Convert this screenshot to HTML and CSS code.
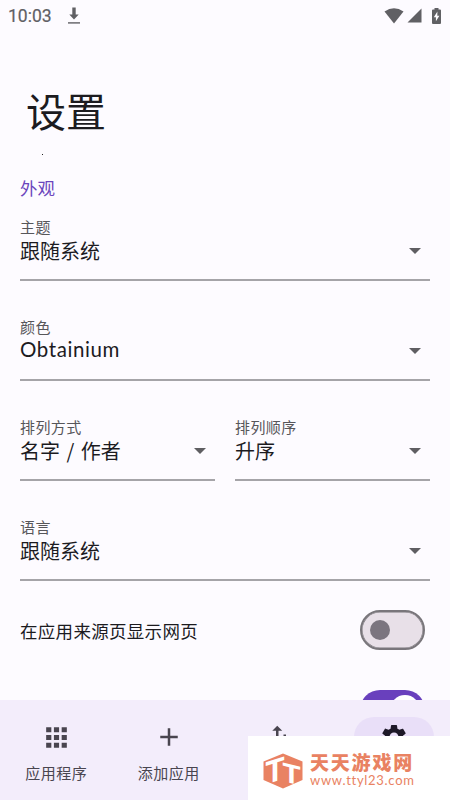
FILE: index.html
```
<!DOCTYPE html>
<html lang="zh-CN">
<head>
  <meta charset="UTF-8">
  <title>设置</title>
  <link rel="stylesheet" href="styles.css">
</head>
<body>
  <div class="screen">
    <header class="status-bar">
      <span class="clock">10:03</span>
      <svg class="download" width="14" height="18" viewBox="0 0 14 18">
        <path d="M5.3.5h3.400v7h3L7 12.500 2.300 7.500h3z"/>
        <path d="M1 15.200h12v1.400H1z"/>
      </svg>
      <div class="status-icons">
        <svg width="20" height="16" viewBox="0 0 20 16"><path d="M.5 3.600Q10-3 19.500 3.600L10 15.500z"/></svg>
        <svg width="15" height="15" viewBox="0 0 15 15"><path d="M14.500.5v14H.5z"/></svg>
        <svg class="battery" width="9" height="16" viewBox="0 0 9 16">
          <path d="M2.500 0h4v1.500H8q1 0 1 1V15q0 1-1 1H1q-1 0-1-1V2.500q0-1 1-1h1.500z"/>
          <path class="bolt" d="M5.400 3.500L1.800 9.300h2.100v4l3.500-5.600H5.300z"/>
        </svg>
      </div>
    </header>

    <main class="settings">
      <h1>设置</h1>
      <span class="dot"></span>
      <h2>外观</h2>

      <div class="field">
        <label>主题</label>
        <div class="value">跟随系统</div>
      </div>
      <div class="field">
        <label>颜色</label>
        <div class="value"><span class="latin">Obtainium</span></div>
      </div>
      <div class="field-row">
        <div class="field">
          <label>排列方式</label>
          <div class="value">名字 / 作者</div>
        </div>
        <div class="field">
          <label>排列顺序</label>
          <div class="value">升序</div>
        </div>
      </div>
      <div class="field">
        <label>语言</label>
        <div class="value">跟随系统</div>
      </div>

      <div class="switch-row">
        <span>在应用来源页显示网页</span>
        <div class="switch"></div>
      </div>
      <div class="switch-row">
        <span></span>
        <div class="switch on"></div>
      </div>
    </main>

    <nav class="bottom-nav">
      <div class="nav-item">
        <div class="nav-icon">
          <svg width="31" height="31" viewBox="0 0 24 24"><path d="M4 8h4V4H4zm6 12h4v-4h-4zm-6 0h4v-4H4zm0-6h4v-4H4zm6 0h4v-4h-4zm6-10v4h4V4zm-6 4h4V4h-4zm6 6h4v-4h-4zm0 6h4v-4h-4z"/></svg>
        </div>
        <span>应用程序</span>
      </div>
      <div class="nav-item">
        <div class="nav-icon">
          <svg width="30" height="30" viewBox="0 0 24 24"><path d="M19 13h-6v6h-2v-6H5v-2h6V5h2v6h6z"/></svg>
        </div>
        <span>添加应用</span>
      </div>
      <div class="nav-item">
        <div class="nav-icon">
          <svg width="30" height="30" viewBox="0 0 24 24"><path d="M9 3L5 6.990h3V14h2V6.990h3zm7 14.010V10h-2v7.010h-3L15 21l4-3.990z"/></svg>
        </div>
      </div>
      <div class="nav-item active">
        <div class="nav-icon">
          <svg width="30" height="30" viewBox="0 0 24 24"><path d="M19.140 12.940c.04-.3.06-.61.06-.94 0-.32-.02-.64-.07-.94l2.030-1.580c.18-.14.23-.41.12-.61l-1.920-3.320c-.12-.22-.37-.29-.59-.22l-2.390.96c-.5-.38-1.030-.7-1.620-.94l-.36-2.540c-.04-.24-.24-.41-.48-.41h-3.840c-.24 0-.43.17-.47.41l-.36 2.540c-.59.24-1.130.57-1.620.94l-2.390-.96c-.22-.08-.47 0-.59.22L2.740 8.870c-.12.21-.08.47.12.61l2.030 1.580c-.05.3-.09.63-.09.94s.02.64.07.94l-2.030 1.580c-.18.14-.23.41-.12.61l1.920 3.320c.12.22.37.29.59.22l2.390-.96c.5.38 1.030.7 1.620.94l.36 2.540c.05.24.24.41.48.41h3.840c.24 0 .44-.17.47-.41l.36-2.540c.59-.24 1.130-.56 1.620-.94l2.390.96c.22.08.47 0 .59-.22l1.920-3.320c.12-.22.07-.47-.12-.61zM12 15.600c-1.980 0-3.600-1.620-3.600-3.600s1.620-3.600 3.600-3.600 3.600 1.620 3.600 3.600-1.620 3.600-3.600 3.600z"/></svg>
        </div>
      </div>
    </nav>

    <div class="site-badge">
      <svg width="40" height="36" viewBox="0 0 40 36">
        <path d="M20 .5L39.500 8.500v18.500L20 35.500.5 27V8.500z"/>
        <text transform="translate(2.500 31.500) skewY(-18)" textLength="19" lengthAdjust="spacingAndGlyphs">T</text>
        <text class="small" transform="translate(19.500 28) skewY(14)" textLength="18" lengthAdjust="spacingAndGlyphs">T</text>
      </svg>
      <div class="site-text">
        <div class="site-name">天天游戏网</div>
        <div class="site-url">www.ttyl23.com</div>
      </div>
    </div>
  </div>
</body>
</html>
```
FILE: styles.css
```
body {
  margin: 0;
  font-family: "Noto Sans CJK SC", sans-serif;
  background-color: #fdfbff;
  color: #1c1b1f;
}

.screen {
  position: relative;
  display: flex;
  flex-direction: column;
  width: 450px;
  height: 800px;
  overflow: hidden;
}

.status-bar {
  display: flex;
  align-items: center;
  flex: none;
  height: 31px;
  padding: 0 9px 0 8px;
  box-sizing: border-box;
  color: #606064;
}

.status-bar svg {
  fill: #606064;
}

.clock {
  font-family: Roboto, sans-serif;
  font-size: 17.5px;
  line-height: 31px;
  padding-top: 1px;
  -webkit-text-stroke: 0.2px #606064;
}

.download {
  margin-left: 15px;
}

.status-icons {
  display: flex;
  align-items: center;
  gap: 3px;
  margin-left: auto;
}

.status-icons .battery {
  margin-left: 7px;
}

.status-icons .bolt {
  fill: #fdfbff;
}

.settings {
  flex: 1;
  min-height: 0;
  overflow: hidden;
  padding: 0 20px;
}

h1 {
  margin: 49px 0 0 6px;
  font-size: 40px;
  line-height: 60px;
  font-weight: 400;
}

.dot {
  position: absolute;
  left: 42px;
  top: 154px;
  width: 1px;
  height: 1px;
  background-color: #222;
}

h2 {
  margin: 35px 0 15px;
  font-size: 17.5px;
  line-height: 26px;
  font-weight: 400;
  color: #6b45bd;
}

.field {
  position: relative;
  flex: 1;
  height: 65px;
  margin-bottom: 35px;
  box-sizing: border-box;
  border-bottom: 2px solid #a5a4a8;
}

.field label {
  display: block;
  font-size: 15px;
  line-height: 22px;
  letter-spacing: 0.4px;
  color: #57565a;
}

.value {
  display: flex;
  align-items: center;
  justify-content: space-between;
  padding-top: 1px;
  font-size: 20px;
  line-height: 24px;
  word-spacing: 2px;
}

.latin {
  margin: -2px 0 1px;
  font-family: Lato, sans-serif;
  font-size: 20.5px;
  letter-spacing: 0.6px;
}

/* dropdown arrow */
.value::after {
  content: "";
  margin-right: 9px;
  border: 6px solid transparent;
  border-top-color: #5f5e62;
  border-bottom: 0;
}

.field-row {
  display: flex;
  gap: 20px;
}

.switch-row {
  display: flex;
  align-items: center;
  justify-content: space-between;
  height: 40px;
  margin: -6px 5px 40px 0;
  font-size: 17.5px;
  letter-spacing: 0.3px;
}

.switch-row + .switch-row {
  margin-top: 0;
}

.switch {
  width: 65px;
  height: 40px;
  box-sizing: border-box;
  padding: 8px;
  border: 2px solid #79767b;
  border-radius: 20px;
  background-color: #e8e0e8;
  box-shadow: inset 0 0 0 0.5px #79767b;
}

.switch::before {
  content: "";
  display: block;
  width: 20px;
  height: 20px;
  border-radius: 50%;
  background-color: #7b757f;
}

.switch.on {
  padding: 5px;
  border: 0;
  background-color: #6940bd;
  box-shadow: none;
}

.switch.on::before {
  width: 30px;
  height: 30px;
  margin-left: auto;
  background-color: #fff;
}

.bottom-nav {
  display: flex;
  flex: none;
  height: 100px;
  background-color: #f3edfb;
}

.nav-item {
  display: flex;
  flex: 1;
  flex-direction: column;
  align-items: center;
  padding-top: 17px;
  font-size: 15px;
  line-height: 22px;
  letter-spacing: 0.5px;
  color: #49454f;
}

.nav-icon {
  display: flex;
  align-items: center;
  justify-content: center;
  width: 80px;
  height: 40px;
  margin-bottom: 5px;
  border-radius: 20px;
}

.nav-icon svg {
  fill: #49454f;
}

.nav-item.active .nav-icon {
  background-color: #e9dff8;
}

.nav-item.active svg {
  fill: #1d1828;
}

.site-badge {
  position: absolute;
  right: 0;
  bottom: 0;
  display: flex;
  align-items: center;
  gap: 7px;
  width: 202px;
  height: 64px;
  padding: 0 0 0 15px;
  box-sizing: border-box;
  background-color: #fff;
  color: #e98262;
}

.site-badge svg {
  margin-top: 6px;
  fill: #e98262;
}

.site-badge text {
  font-family: "Liberation Sans", sans-serif;
  font-size: 32px;
  font-weight: 700;
  fill: #fff;
}

.site-badge .small {
  font-size: 27px;
}

.site-name {
  margin-top: 4px;
  font-size: 19px;
  line-height: 20px;
  font-weight: 900;
  letter-spacing: 1.8px;
}

.site-url {
  font-family: Lato, sans-serif;
  font-size: 13px;
  line-height: 17px;
  letter-spacing: 0.7px;
}
```
